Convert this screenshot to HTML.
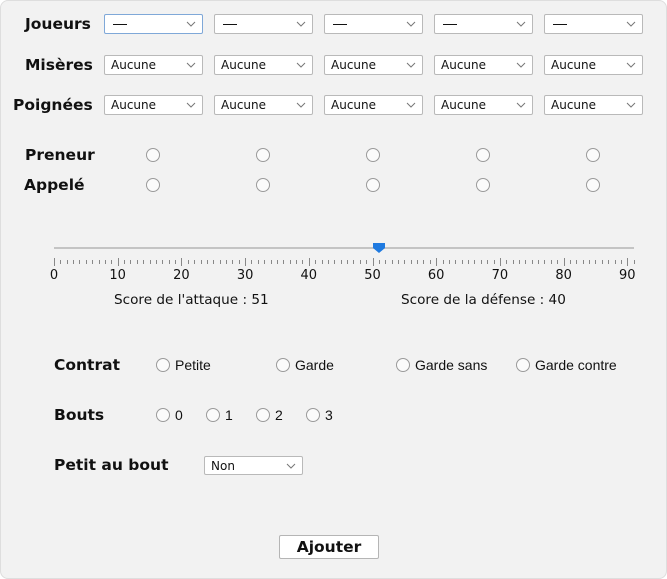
<!DOCTYPE html>
<html><head><meta charset="utf-8"><style>
*{box-sizing:border-box;margin:0;padding:0}
body{width:667px;height:579px;background:#fff;font-family:"DejaVu Sans","Liberation Sans",sans-serif;position:relative;overflow:hidden}
#p{position:absolute;left:0;top:0;width:667px;height:579px;background:#f2f2f2;border-radius:8px;box-shadow:inset 0 0 0 1px #dedede}
.a{position:absolute}
.lb{position:absolute;font-weight:bold;font-size:15.5px;color:#111;line-height:20px}
.sel{position:absolute;width:99px;height:20px;background:#fff;border:1px solid #b9b9b9;border-radius:2px;font-size:12px;line-height:18px;padding-left:6px;color:#111}
.sel svg{position:absolute;right:6px;top:6px}
.r{position:absolute;width:14px;height:14px;border:1px solid #9a9a9a;border-radius:50%;background:#fbfbfb}
.t{position:absolute;font-family:"Liberation Sans",sans-serif;font-size:14px;color:#111;line-height:16px}
.n{position:absolute;font-size:13px;color:#111;line-height:14px;transform:translateX(-50%)}
</style></head><body><div id="p">
<div class="lb" style="left:25px;top:14px">Joueurs</div>
<div class="lb" style="left:25px;top:55px">Misères</div>
<div class="lb" style="left:13px;top:95px">Poignées</div>
<div class="lb" style="left:25px;top:145px">Preneur</div>
<div class="lb" style="left:24px;top:175px">Appelé</div>

<div id="sels"></div>

<div class="a" style="left:54px;top:247px;width:580px;height:2px;background:#c4c4c4"></div>
<svg class="a" style="left:372px;top:242px" width="14" height="12"><path d="M1 1H13V6L7 11L1 6Z" fill="#1f7ae0"/></svg>
<svg class="a" style="left:0;top:255px" width="667" height="12" id="tk"></svg>
<div id="nums"></div>
<div class="a" style="left:114px;top:292px;font-size:13.6px;color:#111">Score de l'attaque : 51</div>
<div class="a" style="left:401px;top:292px;font-size:13.6px;color:#111">Score de la défense : 40</div>

<div class="lb" style="left:54px;top:355px">Contrat</div>
<div class="r" style="left:156px;top:358px"></div><div class="t" style="left:175px;top:357px">Petite</div>
<div class="r" style="left:276px;top:358px"></div><div class="t" style="left:295px;top:357px">Garde</div>
<div class="r" style="left:396px;top:358px"></div><div class="t" style="left:415px;top:357px">Garde sans</div>
<div class="r" style="left:516px;top:358px"></div><div class="t" style="left:535px;top:357px">Garde contre</div>

<div class="lb" style="left:54px;top:405px">Bouts</div>
<div class="r" style="left:156px;top:408px"></div><div class="t" style="left:175px;top:407px">0</div>
<div class="r" style="left:206px;top:408px"></div><div class="t" style="left:225px;top:407px">1</div>
<div class="r" style="left:256px;top:408px"></div><div class="t" style="left:275px;top:407px">2</div>
<div class="r" style="left:306px;top:408px"></div><div class="t" style="left:325px;top:407px">3</div>

<div class="lb" style="left:54px;top:455px">Petit au bout</div>
<div class="sel" style="left:204px;top:456px;height:19px">Non<svg width="10" height="6"><path d="M1 1L5 5L9 1" stroke="#777" fill="none"/></svg></div>

<div class="a" style="left:279px;top:535px;width:100px;height:24px;background:#fff;border:1px solid #b5b5b5;border-radius:2px;text-align:center;font-size:15.5px;font-weight:bold;line-height:22px;color:#111">Ajouter</div>
</div>
<script>
var s='',xs=[104,214,324,434,544],ys=[14,55,95];
var chev='<svg width="10" height="6"><path d="M1 1L5 5L9 1" stroke="#777" fill="none"/></svg>';
ys.forEach(function(y,ri){xs.forEach(function(x,ci){
var txt=ri==0?'<span style="display:inline-block;width:14px;border-top:1.5px solid #111;vertical-align:middle;margin-left:2px"></span>':'Aucune';
var st=(ri==0&&ci==0)?'border-color:#7fa8d8;':'';
s+='<div class="sel" style="left:'+x+'px;top:'+y+'px;'+st+'">'+txt+chev+'</div>';});});
[153,263,373,483,593].forEach(function(x){[155,185].forEach(function(y){s+='<div class="r" style="left:'+(x-7)+'px;top:'+(y-7)+'px"></div>';});});
document.getElementById('sels').innerHTML=s;
var t='';for(var i=0;i<=91;i++){var x=54+i*6.37;x=Math.round(x)+0.5;var big=i%10==0;t+='<line x1="'+x+'" x2="'+x+'" y1="'+(big?3:5)+'" y2="'+(big?11:9)+'" stroke="#888" stroke-width="1"/>';}
document.getElementById('tk').innerHTML=t;
var n='';for(var k=0;k<=9;k++){n+='<div class="n" style="left:'+(54+k*63.7)+'px;top:269px">'+(k*10)+'</div>';}
document.getElementById('nums').innerHTML=n;
</script>
</body></html>
